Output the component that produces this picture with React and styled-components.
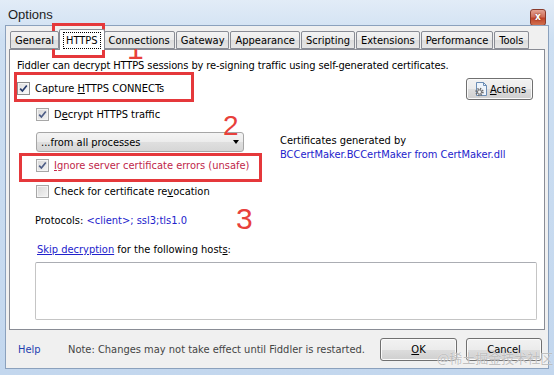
import styled, { createGlobalStyle } from 'styled-components';

const Global = createGlobalStyle`
  html, body { margin: 0; padding: 0; background: #fff; }
  #root { width: 554px; height: 375px; overflow: hidden; }
`;

const ui = `"DejaVu Sans Condensed", "DejaVu Sans", sans-serif`;

const Window = styled.div`
  position: relative;
  width: 554px;
  height: 375px;
  box-sizing: border-box;
  padding: 0 5px 7px 5px;
  display: flex;
  flex-direction: column;
  background: linear-gradient(#e2ecf7, #cddff2 40px, #c3d7ee);
  font-family: ${ui};
  font-stretch: condensed;
  font-size: 11px;
  color: #000;
`;

const TitleBar = styled.div`
  height: 25px;
  display: flex;
  align-items: center;
  justify-content: space-between;
  padding: 0 3px 0 3px;
`;

const Title = styled.span`
  font-family: "Liberation Sans", Arial, sans-serif;
  font-size: 13px;
  color: #1e1e1e;
  margin-top: 4px;
`;

const CloseBtn = styled.div`
  width: 16px;
  height: 17px;
  margin-top: 9px;
  box-sizing: border-box;
  border: 1px solid #8a3b2c;
  border-radius: 3px;
  background: linear-gradient(#e3a393, #d1705a 45%, #c04428 55%, #d0704f);
  display: flex;
  align-items: center;
  justify-content: center;
  color: #fff;
  font-family: "DejaVu Sans", sans-serif;
  font-weight: bold;
  font-size: 10px;
  line-height: 1;
  text-shadow: 0 0 2px #6a1a0a;
`;

const Client = styled.div`
  flex: 1;
  display: flex;
  flex-direction: column;
  background: #f0f0f0;
  border: 1px solid #8ba1bd;
  padding: 4px 3px 0 3px;
`;

const TabStrip = styled.div`
  height: 19px;
  display: flex;
  align-items: flex-end;
  padding-left: 1px;
  position: relative;
  z-index: 1;
`;

const Tab = styled.div`
  box-sizing: border-box;
  height: ${p => (p.$active ? '21px' : '18px')};
  padding: 0 ${p => (p.$active ? '5px' : '4px')};
  border: 1px solid #898c95;
  border-bottom: ${p => (p.$active ? 'none' : '1px solid #898c95')};
  margin: ${p => (p.$active ? '0 -1px -1px -1px' : '0 1px 0 0')};
  border-radius: 2px 2px 0 0;
  background: ${p => (p.$active ? '#fff' : 'linear-gradient(#f3f3f3, #ebebeb 50%, #dddddd 51%, #e6e6e6)')};
  display: flex;
  align-items: center;
  white-space: nowrap;
  position: relative;
  z-index: ${p => (p.$active ? 2 : 1)};
`;

const Focus = styled.span`
  outline: 1px dotted #000;
  outline-offset: 1px;
  padding: 0 1px;
`;

const Panel = styled.div`
  height: 281px;
  box-sizing: border-box;
  background: #fff;
  border: 1px solid #898c95;
  padding: 0 7px;
  display: flex;
  flex-direction: column;
`;

const Intro = styled.div`
  margin-top: 9px;
  line-height: 14px;
  white-space: nowrap;
  letter-spacing: -0.1px;
`;

const TopRow = styled.div`
  margin-top: 5px;
  height: 22px;
  display: flex;
  justify-content: space-between;
  align-items: flex-start;
  padding-right: 4px;
`;

const CheckRow = styled.label`
  display: flex;
  align-items: center;
  gap: 5px;
  height: 14px;
  margin-top: ${p => p.$top || 0}px;
  white-space: nowrap;
  color: ${p => p.$color || '#000'};
`;

const Box = styled.span`
  width: 13px;
  height: 13px;
  box-sizing: border-box;
  border: 1px solid ${p => (p.$dim ? '#a7a7a7' : '#8e8f8f')};
  background: ${p => (p.$dim ? 'linear-gradient(135deg, #d7d7d7, #f4f4f4)' : 'linear-gradient(135deg, #dcdcdc, #fdfdfd)')};
  box-shadow: inset 0 0 0 1px #f4f4f4;
  display: flex;
  align-items: center;
  justify-content: center;
  flex: none;
`;

const Checkbox = ({ checked, dim }) => (
  <Box $dim={dim}>
    {checked && (
      <svg width="9" height="9" viewBox="0 0 9 9">
        <path d="M1.2 4.6 L3.4 7 L7.8 1.5" fill="none" stroke={dim ? '#4d5d86' : '#253a6b'} strokeWidth="1.7" />
      </svg>
    )}
  </Box>
);

const Button = styled.div`
  width: ${p => p.$w}px;
  height: ${p => p.$h || 23}px;
  box-sizing: border-box;
  border: 1px solid #707070;
  border-radius: 3px;
  background: linear-gradient(#f2f2f2, #ebebeb 50%, #dddddd 51%, #cfcfcf);
  box-shadow: inset 0 0 0 1px #fafafa;
  display: flex;
  align-items: center;
  justify-content: center;
  gap: 1px;
  margin-left: ${p => p.$ml || 0}px;
`;

const Body = styled.div`
  display: flex;
  margin-top: 6px;
`;

const LeftCol = styled.div`
  width: 263px;
  box-sizing: border-box;
  padding-left: 19px;
  display: flex;
  flex-direction: column;
`;

const RightCol = styled.div`
  padding-top: 28px;
  line-height: 14px;
  white-space: nowrap;
`;

const Link = styled.span`
  color: #2222cc;
  text-decoration: ${p => (p.$u ? 'underline' : 'none')};
`;

const Select = styled.div`
  margin-top: 11px;
  width: 208px;
  height: 20px;
  box-sizing: border-box;
  border: 1px solid #a6a6a6;
  border-radius: 3px;
  background: linear-gradient(#f4f4f4, #ececec 50%, #dfdfdf 51%, #d6d6d6);
  display: flex;
  align-items: center;
  justify-content: space-between;
  padding: 0 3px 0 4px;
`;

const Arrow = styled.span`
  width: 0;
  height: 0;
  border-left: 3.5px solid transparent;
  border-right: 3.5px solid transparent;
  border-top: 4px solid #000;
  margin-right: 1px;
`;

const Line = styled.div`
  margin-left: ${p => p.$ml}px;
  margin-top: ${p => p.$mt}px;
  line-height: 14px;
  white-space: nowrap;
`;

const HostBox = styled.div`
  margin: 5px 0 0 18px;
  width: 502px;
  height: 58px;
  box-sizing: border-box;
  border: 1px solid #c5c5c5;
  border-top-color: #abadb3;
  border-radius: 2px;
  background: #fff;
`;

const Footer = styled.div`
  height: 37px;
  display: flex;
  align-items: center;
  padding: 1px 0 0 9px;
`;

const Help = styled.span`
  color: #1f3fb0;
  width: 50px;
`;

const Note = styled.span`
  color: #444;
  width: 312px;
  white-space: nowrap;
`;

const Mark = styled.div`
  position: absolute;
  left: ${p => p.$x}px;
  top: ${p => p.$y}px;
  width: ${p => p.$w}px;
  height: ${p => p.$h}px;
  box-sizing: border-box;
  border: 3px solid #e5383b;
  pointer-events: none;
`;

const Digit = styled.span`
  position: absolute;
  left: ${p => p.$x}px;
  top: ${p => p.$y}px;
  font-family: "Liberation Sans", Arial, sans-serif;
  font-stretch: normal;
  font-size: ${p => p.$s}px;
  line-height: 1;
  color: #e8403b;
`;

const Watermark = styled.span`
  position: absolute;
  left: 437px;
  top: 348px;
  font-family: "Noto Sans CJK SC", sans-serif;
  font-stretch: normal;
  font-size: 13px;
  color: rgba(165, 165, 165, 0.7);
  text-shadow: 0 0 1px #fff;
  white-space: nowrap;
`;

const ActionsIcon = () => (
  <svg width="16" height="16" viewBox="0 0 16 16">
    <path d="M3.5 1.5h7l3 3v10h-10z" fill="#eef4fb" stroke="#6b8db5" />
    <path d="M10.5 1.5v3h3" fill="none" stroke="#6b8db5" />
    <circle cx="6.5" cy="11" r="3.3" fill="none" stroke="#6d6d6d" strokeWidth="1.8" strokeDasharray="1.3 1.3" />
    <circle cx="6.5" cy="11" r="2.2" fill="#d9d9d9" stroke="#6d6d6d" strokeWidth="0.9" />
    <circle cx="6.5" cy="11" r="0.8" fill="#fff" />
  </svg>
);

const tabs = ['General', 'HTTPS', 'Connections', 'Gateway', 'Appearance', 'Scripting', 'Extensions', 'Performance', 'Tools'];

export default function App() {
  return (
    <>
      <Global />
      <Window>
        <TitleBar>
          <Title>Options</Title>
          <CloseBtn>x</CloseBtn>
        </TitleBar>
        <Client>
          <TabStrip>
            {tabs.map(t => (
              <Tab key={t} $active={t === 'HTTPS'}>
                {t === 'HTTPS' ? <Focus>{t}</Focus> : t}
              </Tab>
            ))}
          </TabStrip>
          <Panel>
            <Intro>Fiddler can decrypt HTTPS sessions by re-signing traffic using self-generated certificates.</Intro>
            <TopRow>
              <CheckRow $top={3}>
                <Checkbox checked />
                <span>Capture <u>H</u>TTPS CONNECTs</span>
              </CheckRow>
              <Button $w={67} $h={22}>
                <ActionsIcon />
                <span><u>A</u>ctions</span>
              </Button>
            </TopRow>
            <Body>
              <LeftCol>
                <CheckRow $top={1}>
                  <Checkbox checked dim />
                  <span>D<u>e</u>crypt HTTPS traffic</span>
                </CheckRow>
                <Select>
                  <span>...from all processes</span>
                  <Arrow />
                </Select>
                <CheckRow $top={6} $color="#c0264a">
                  <Checkbox checked dim />
                  <span><u>I</u>gnore server certificate errors (unsafe)</span>
                </CheckRow>
                <CheckRow $top={12}>
                  <Checkbox dim />
                  <span>Check for certificate re<u>v</u>ocation</span>
                </CheckRow>
              </LeftCol>
              <RightCol>
                <div>Certificates generated by</div>
                <Link>BCCertMaker.BCCertMaker from CertMaker.dll</Link>
              </RightCol>
            </Body>
            <Line $ml={18} $mt={16}>
              Protocols: <Link>&lt;client&gt;; ssl3;tls1.0</Link>
            </Line>
            <Line $ml={20} $mt={15}>
              <Link $u>Skip decryption</Link> for the following host<u>s</u>:
            </Line>
            <HostBox />
          </Panel>
          <Footer>
            <Help>Help</Help>
            <Note>Note: Changes may not take effect until Fiddler is restarted.</Note>
            <Button $w={77}><span><u>O</u>K</span></Button>
            <Button $w={76} $ml={9}>Cancel</Button>
          </Footer>
        </Client>
        <Mark $x={52} $y={23} $w={53} $h={35} />
        <Mark $x={14} $y={72} $w={180} $h={30} />
        <Mark $x={19} $y={153} $w={243} $h={29} />
        <Digit $x={127} $y={34} $s={30}>1</Digit>
        <Digit $x={223} $y={112} $s={28}>2</Digit>
        <Digit $x={236} $y={204} $s={30}>3</Digit>
        <Watermark>@稀土掘金技术社区</Watermark>
      </Window>
    </>
  );
}
